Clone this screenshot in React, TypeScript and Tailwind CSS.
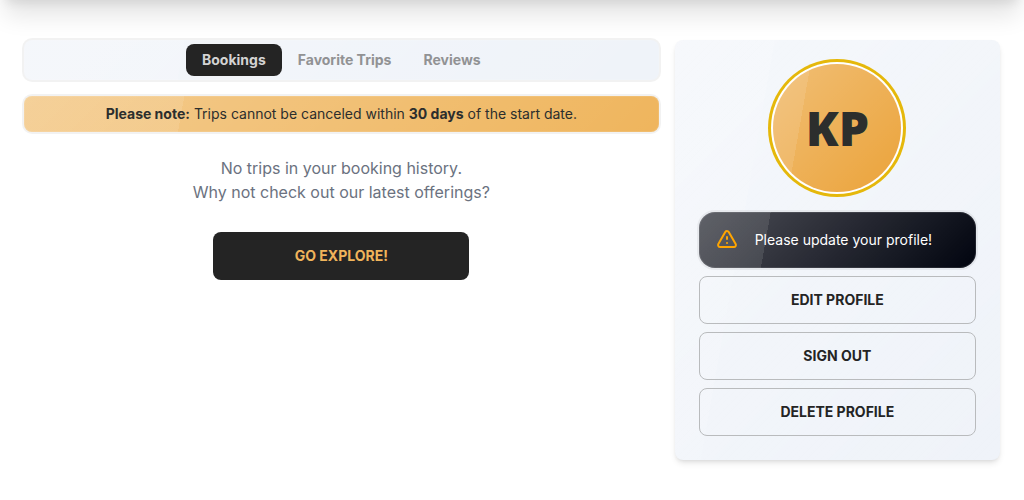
import { useState } from "react";

const glass =
  "bg-[linear-gradient(135deg,rgba(255,255,255,0.3),transparent),linear-gradient(100deg,rgba(255,255,255,0.1)_25%,transparent_25%)] shadow-[inset_0_0_0_1px_rgba(255,255,255,0.1),0_0_0_2px_rgba(0,0,0,0.05)]";

const tabs = ["Bookings", "Favorite Trips", "Reviews"];
const actions = ["Edit profile", "Sign out", "Delete profile"];

function Tabs() {
  const [active, setActive] = useState("Bookings");
  return (
    <div role="tablist" className={`flex justify-center rounded-lg bg-[#eff3f9] p-1 ${glass}`}>
      {tabs.map((tab) => (
        <button
          key={tab}
          type="button"
          role="tab"
          aria-selected={tab === active}
          onClick={() => setActive(tab)}
          className={`h-8 rounded-lg px-4 text-sm font-bold ${
            tab === active ? "bg-[#242424] text-[#d3d3d3]" : "text-[#919294]"
          }`}
        >
          {tab}
        </button>
      ))}
    </div>
  );
}

function WarningIcon() {
  return (
    <svg
      viewBox="0 0 24 24"
      fill="none"
      stroke="currentColor"
      strokeWidth="2"
      strokeLinecap="round"
      strokeLinejoin="round"
      aria-hidden="true"
      className="size-6 shrink-0 text-[#ffa500]"
    >
      <path d="M12 9v2m0 4h.01m-6.938 4h13.856c1.54 0 2.502-1.667 1.732-3L13.732 4c-.77-1.333-2.694-1.333-3.464 0L3.34 16c-.77 1.333.192 3 1.732 3z" />
    </svg>
  );
}

function ProfileCard() {
  return (
    <aside className="w-1/3 rounded-lg bg-[#eff3f9] bg-[linear-gradient(135deg,rgba(255,255,255,0.4),transparent),linear-gradient(100deg,rgba(255,255,255,0.1)_25%,transparent_25%)] p-6 shadow-md">
      <div className="mx-auto mb-5 flex size-32 items-center justify-center rounded-full bg-[#eba33a] bg-[linear-gradient(135deg,rgba(255,255,255,0.3),transparent),linear-gradient(100deg,rgba(255,255,255,0.1)_25%,transparent_25%)] ring-3 ring-[#e5b80b] ring-offset-2 ring-offset-white">
        <span className="font-[family-name:'Open_Sans',sans-serif] text-5xl font-extrabold text-[#2c2e2d]">KP</span>
      </div>
      <div role="alert" className={`flex h-14 items-center gap-4 rounded-2xl bg-[#01040f] px-4 text-white ${glass}`}>
        <WarningIcon />
        <span className="text-sm">Please update your profile!</span>
      </div>
      <div className="mt-2 flex flex-col gap-2">
        {actions.map((action) => (
          <button
            key={action}
            type="button"
            className="h-12 rounded-lg border border-[#b9bbbd] text-sm font-bold text-[#242424] uppercase"
          >
            {action}
          </button>
        ))}
      </div>
    </aside>
  );
}

export default function App() {
  return (
    <div className="overflow-hidden bg-white font-[family-name:Inter,sans-serif]">
      <header className="-mt-16 h-16 bg-white shadow-[0_20px_25px_-5px_rgba(0,0,0,0.11),0_8px_10px_-6px_rgba(0,0,0,0.09)]" />
      <main className="flex items-start px-6 py-10">
        <section className="w-2/3 pr-4">
          <Tabs />
          <p className={`mt-4 rounded-lg bg-[#efb55d] px-4 py-2 text-center text-sm text-[#2c2e2d] ${glass}`}>
            <strong className="font-bold">Please note:</strong> Trips cannot be canceled within{" "}
            <strong className="font-bold">30 days</strong> of the start date.
          </p>
          <p className="mt-6 text-center text-base text-[#6b7280]">
            No trips in your booking history.
            <br />
            Why not check out our latest offerings?
          </p>
          <a
            href="#explore"
            className="mx-auto mt-7 flex h-12 w-64 items-center justify-center rounded-lg bg-[#242424] text-sm font-bold text-[#f0b45b] uppercase"
          >
            Go explore!
          </a>
        </section>
        <ProfileCard />
      </main>
    </div>
  );
}
